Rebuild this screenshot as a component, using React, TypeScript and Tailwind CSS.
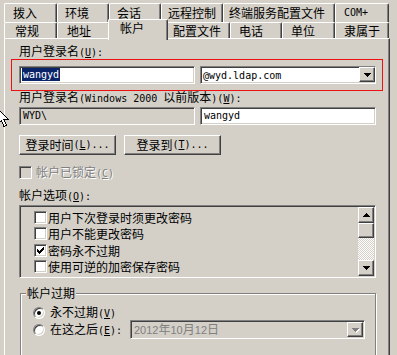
import React from "react";

const M = ({ children }: { children: React.ReactNode }) => (
  <span className="font-['DejaVu_Sans_Mono',monospace] text-[10px]">{children}</span>
);
const U = ({ children }: { children: React.ReactNode }) => (
  <span className="underline underline-offset-[1px]">{children}</span>
);

const sunken =
  "border border-t-[#808080] border-l-[#808080] border-b-white border-r-white shadow-[inset_1px_1px_0_#404040,inset_-1px_-1px_0_#d4d0c8]";
const raised =
  "border border-t-white border-l-white border-b-[#404040] border-r-[#404040] shadow-[inset_-1px_-1px_0_#808080]";

type T = { label: string; cls: string; mono?: boolean; active?: boolean };
const row1: T[] = [
  { label: "拨入", cls: "w-[53px] pl-[8px]" },
  { label: "环境", cls: "w-[52px] pl-[7px]" },
  { label: "会话", cls: "w-[52px] pl-[7px]" },
  { label: "远程控制", cls: "w-[62px] pl-[6px]" },
  { label: "终端服务配置文件", cls: "w-[112px] pl-[5px]" },
  { label: "COM+", cls: "w-[54px] pl-[8px]", mono: true },
];
const row2: T[] = [
  { label: "常规", cls: "w-[53px] pl-[10px]" },
  { label: "地址", cls: "w-[53px] pl-[9px]" },
  { label: "帐户", cls: "w-[60px] pl-[11px]", active: true },
  { label: "配置文件", cls: "w-[64px] pl-[6px]" },
  { label: "电话", cls: "w-[52px] pl-[8px]" },
  { label: "单位", cls: "w-[53px] pl-[8px]" },
  { label: "隶属于", cls: "w-[54px] pl-[8px]" },
];

function Tab({ t }: { t: T }) {
  const base =
    "flex border-t border-l border-white border-r border-r-[#404040] shadow-[inset_-1px_0_0_#808080] rounded-tl-[2px] rounded-tr-[2px] bg-[#d4d0c8]";
  const state = t.active
    ? "relative z-10 -mx-[2px] -mt-[3px] h-[21px] items-start pt-[2px]"
    : "h-full items-center";
  return (
    <div className={`${base} ${state} ${t.cls}`}>
      {t.mono ? <M>{t.label}</M> : t.label}
    </div>
  );
}

function DownArrow({ color = "#000" }: { color?: string }) {
  return (
    <svg width="7" height="4" viewBox="0 0 7 4" shapeRendering="crispEdges">
      <path d="M0 0h7v1h-1v1h-1v1h-1v1h-1v-1h-1v-1h-1v-1h-1z" fill={color} />
    </svg>
  );
}
function UpArrow() {
  return (
    <svg width="7" height="4" viewBox="0 0 7 4" shapeRendering="crispEdges">
      <path d="M3 0h1v1h1v1h1v1h1v1h-7v-1h1v-1h1v-1h1z" fill="#000" />
    </svg>
  );
}

function CheckBox({ checked, disabled }: { checked?: boolean; disabled?: boolean }) {
  return (
    <div
      className={`w-[13px] h-[13px] shrink-0 flex items-center justify-center ${sunken} ${
        disabled ? "bg-[#d4d0c8]" : "bg-white"
      }`}
    >
      {checked && (
        <svg width="7" height="7" viewBox="0 0 7 7" shapeRendering="crispEdges">
          <path d="M0 2h1v1h1v1h1v-1h1v-1h1v-1h1v-1h1v3h-1v1h-1v1h-1v1h-1v1h-1v-1h-1v-1h-1z" fill="#000" />
        </svg>
      )}
    </div>
  );
}

function Radio({ checked }: { checked?: boolean }) {
  return (
    <div className="w-[12px] h-[12px] shrink-0 rounded-full border border-t-[#808080] border-l-[#808080] border-b-white border-r-white bg-white shadow-[inset_1px_1px_0_#404040,inset_-1px_-1px_0_#d4d0c8] flex items-center justify-center">
      {checked && <div className="w-[4px] h-[4px] rounded-full bg-black" />}
    </div>
  );
}

export default function App() {
  return (
    <div className="relative w-[397px] h-[355px] overflow-hidden bg-[#d4d0c8] text-black text-[12px] leading-[12px] font-['Noto_Sans_CJK_SC',sans-serif]">
      {/* tabs */}
      <div className="pt-[3px] pl-[4px]">
        <div className="flex h-[19px]">
          {row1.map((t) => (
            <Tab key={t.label} t={t} />
          ))}
        </div>
        <div className="flex h-[16px]">
          {row2.map((t) => (
            <Tab key={t.label} t={t} />
          ))}
        </div>
      </div>

      {/* panel */}
      <div className="ml-[4px] w-[386px] h-[330px] border-t border-l border-white border-r border-r-[#404040] shadow-[inset_-1px_0_0_#808080] pl-[14px] flex flex-col">
        <div className="mt-[6px] h-[12px] whitespace-nowrap">
          用户登录名<M>(<U>U</U>):</M>
        </div>

        <div className="relative mt-[9px] flex gap-[5px] h-[19px]">
          <div className={`w-[176px] h-full bg-white ${sunken} pl-[2px] flex items-center`}>
            <span className="bg-[#0a246a] text-white px-[1px] h-[13px] leading-[13px] flex items-center">
              <M>wangyd</M>
            </span>
          </div>
          <div className={`w-[176px] h-full bg-white ${sunken} flex items-center pl-[2px]`}>
            <span className="flex-1">
              <M>@wyd.ldap.com</M>
            </span>
            <div className={`w-[16px] h-[15px] bg-[#d4d0c8] ${raised} flex items-center justify-center`}>
              <DownArrow />
            </div>
          </div>
          <div className="absolute -left-[8px] -top-[7px] w-[372px] h-[32px] border border-[#ee1111] pointer-events-none" />
        </div>

        <div className="mt-[7px] h-[12px] whitespace-nowrap">
          用户登录名<M>(Windows 2000 </M>以前版本<M>)(<U>W</U>):</M>
        </div>

        <div className="mt-[4px] flex gap-[5px] h-[20px]">
          <div className={`w-[176px] h-full bg-[#d4d0c8] ${sunken} pl-[3px] flex items-center`}>
            <M>WYD\</M>
          </div>
          <div className={`w-[176px] h-full bg-white ${sunken} pl-[3px] flex items-center`}>
            <M>wangyd</M>
          </div>
        </div>

        <div className="mt-[10px] flex gap-[8px] h-[21px]">
          <div className={`w-[97px] h-full ${raised} flex items-center justify-center whitespace-nowrap`}>
            登录时间<M>(<U>L</U>)...</M>
          </div>
          <div className={`w-[97px] h-full ${raised} flex items-center justify-center whitespace-nowrap`}>
            登录到<M>(<U>T</U>)...</M>
          </div>
        </div>

        <div className="mt-[11px] flex items-center gap-[4px] h-[13px]">
          <CheckBox disabled />
          <span className="text-[#808080] [text-shadow:1px_1px_0_#ffffff] whitespace-nowrap">
            帐户已锁定<M>(<U>C</U>)</M>
          </span>
        </div>

        <div className="mt-[10px] h-[12px] whitespace-nowrap">
          帐户选项<M>(<U>O</U>):</M>
        </div>

        <div className={`mt-[4px] w-[357px] h-[73px] bg-[#d4d0c8] ${sunken} p-[1px] flex`}>
          <div className="flex-1 pl-[13px] pt-[4px] flex flex-col">
            {[
              ["用户下次登录时须更改密码", false],
              ["用户不能更改密码", false],
              ["密码永不过期", true],
              ["使用可逆的加密保存密码", false],
            ].map(([l, c]) => (
              <div key={l as string} className="h-[17px] flex items-start gap-[1px] whitespace-nowrap">
                <CheckBox checked={c as boolean} />
                <span className="leading-[13px]">{l as string}</span>
              </div>
            ))}
          </div>
          <div className="w-[16px] h-full flex flex-col">
            <div className={`h-[16px] bg-[#d4d0c8] ${raised} flex items-center justify-center`}>
              <UpArrow />
            </div>
            <div className={`h-[15px] bg-[#d4d0c8] ${raised}`} />
            <div className="flex-1 bg-[repeating-conic-gradient(#ffffff_0%_25%,#d4d0c8_0%_50%)] bg-[length:2px_2px]" />
            <div className={`h-[16px] bg-[#d4d0c8] ${raised} flex items-center justify-center`}>
              <DownArrow />
            </div>
          </div>
        </div>

        <div className="relative mt-[15px] ml-[1px] w-[356px] h-[80px] border border-[#808080] shadow-[inset_1px_1px_0_#ffffff,1px_1px_0_#ffffff] pl-[12px] pr-[10px] flex flex-col">
          <div className="absolute -top-[7px] left-[5px] px-[1px] bg-[#d4d0c8] h-[12px] whitespace-nowrap">
            帐户过期
          </div>
          <div className="mt-[13px] flex items-center gap-[5px] h-[12px] whitespace-nowrap">
            <Radio checked />
            <span>
              永不过期<M>(<U>V</U>)</M>
            </span>
          </div>
          <div className="mt-[1px] flex items-center h-[19px] whitespace-nowrap">
            <Radio />
            <span className="ml-[5px]">
              在这之后<M>(<U>E</U>):</M>
            </span>
            <div className={`ml-auto w-[235px] h-[19px] bg-[#d4d0c8] ${sunken} flex items-center pl-[3px] pr-[1px] text-[#808080]`}>
              <span className="flex-1 font-['Liberation_Sans',sans-serif] text-[11px]">
                2012<span className="font-['Noto_Sans_CJK_SC',sans-serif] text-[12px]">年</span>10
                <span className="font-['Noto_Sans_CJK_SC',sans-serif] text-[12px]">月</span>12
                <span className="font-['Noto_Sans_CJK_SC',sans-serif] text-[12px]">日</span>
              </span>
              <div className={`w-[16px] h-[15px] bg-[#d4d0c8] ${raised} flex items-center justify-center`}>
                <span className="drop-shadow-[1px_1px_0_#ffffff] flex">
                  <DownArrow color="#808080" />
                </span>
              </div>
            </div>
          </div>
        </div>
      </div>

      {/* mouse cursor */}
      <svg
        className="absolute left-[-3px] top-[108px]"
        width="13"
        height="20"
        viewBox="0 0 13 20"
        shapeRendering="crispEdges"
      >
        <path d="M0.5 0.5 L0.5 16.5 L4.5 12.5 L7 18.5 L9.5 17.5 L7 11.5 L11.5 11.5 Z" fill="#fff" stroke="#000" strokeWidth="1" />
      </svg>
    </div>
  );
}
